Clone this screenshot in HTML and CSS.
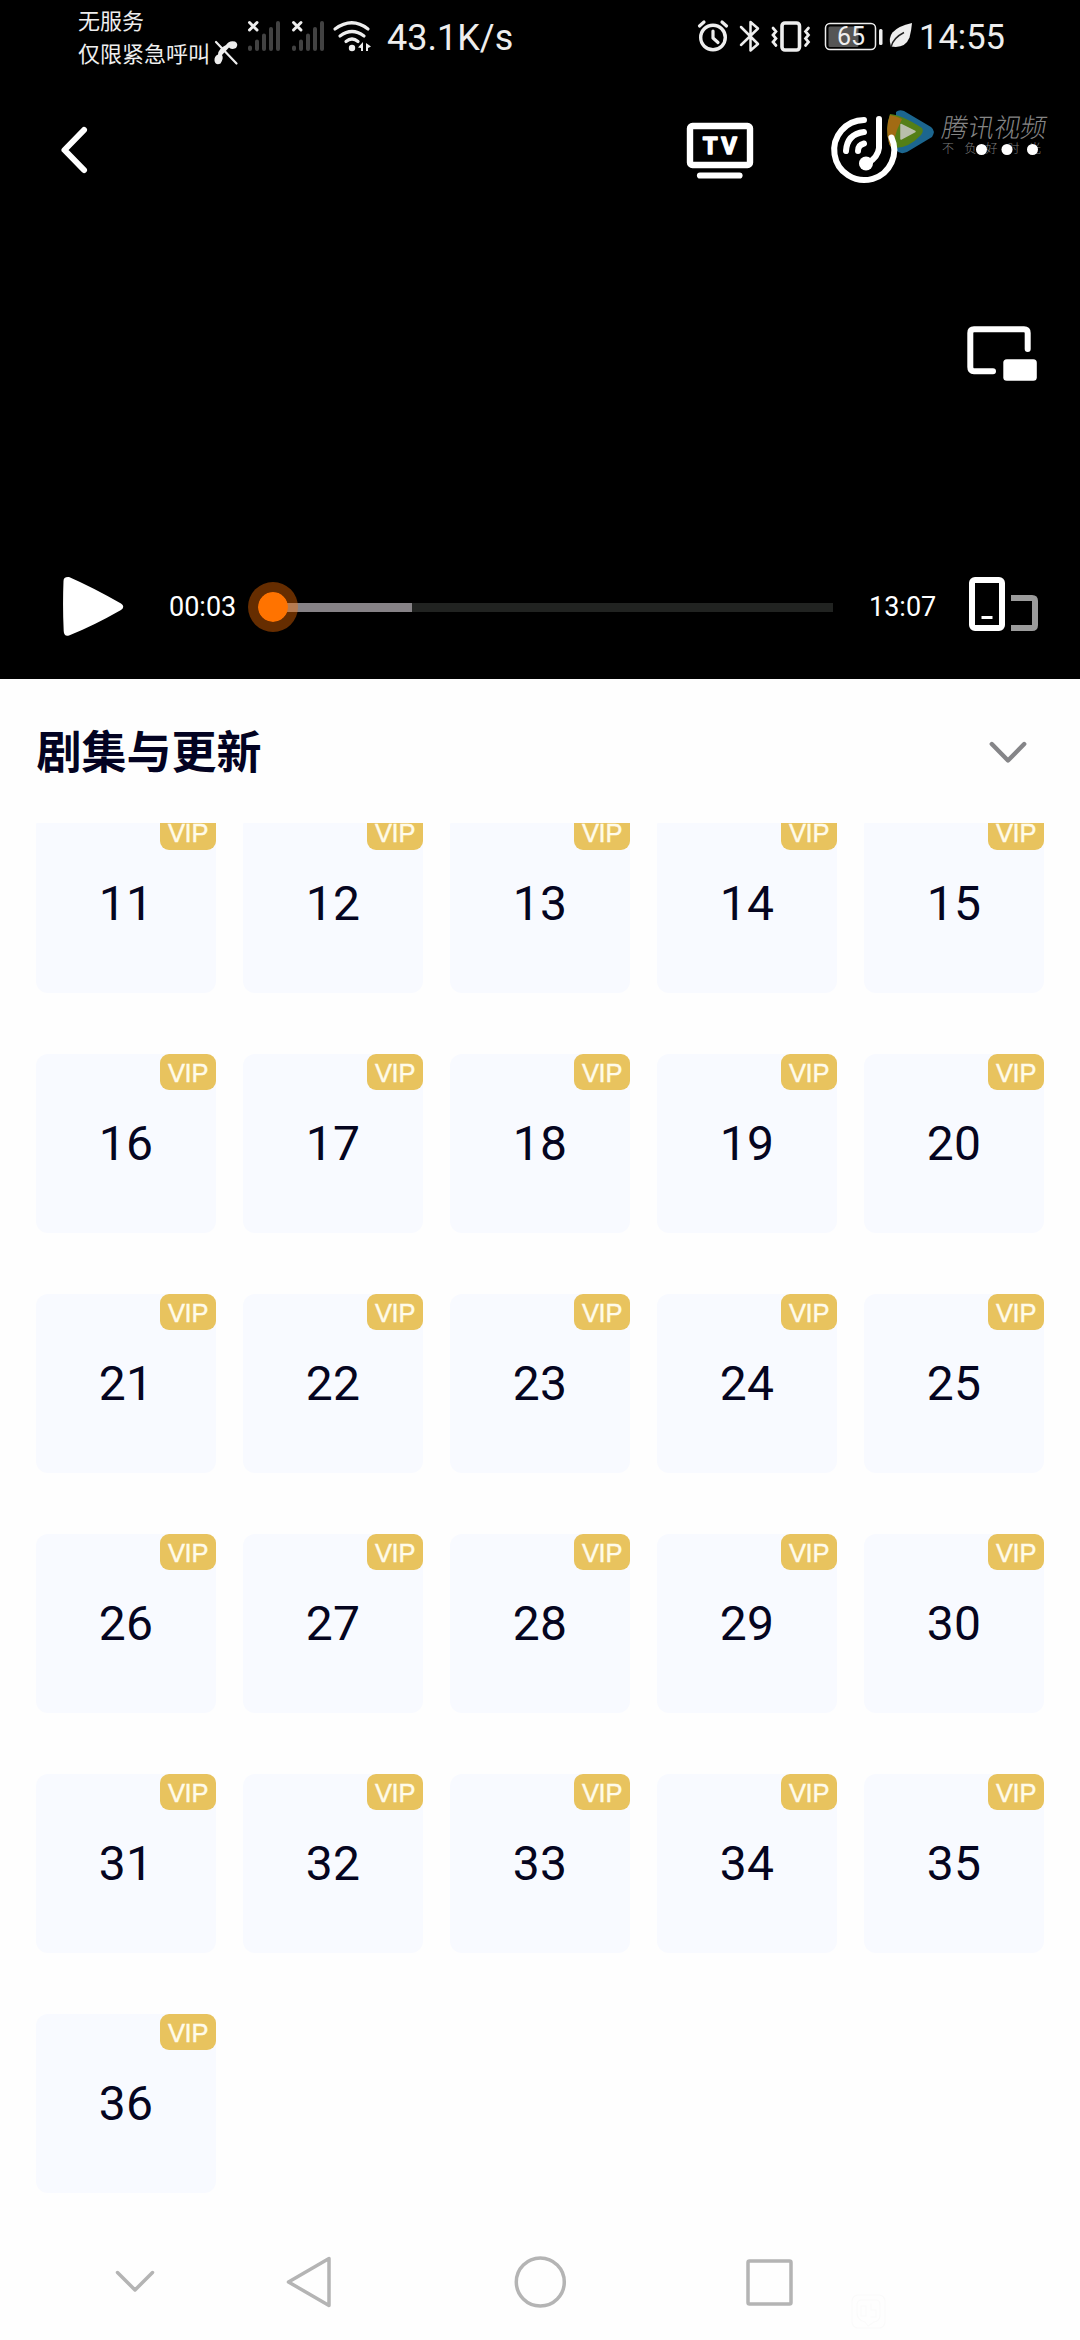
FILE: index.html
```html
<!DOCTYPE html>
<html lang="zh-CN">
<head>
<meta charset="utf-8">
<title>剧集与更新</title>
<link rel="stylesheet" href="styles.css">
</head>
<body>
<section class="player">
  <div class="status">
    <div class="carrier"><span>无服务</span><span>仅限紧急呼叫</span></div>
    <svg class="net-icons" width="162" height="72" viewBox="212 0 162 72">
      <path d="M216 42 236.500 63.500" stroke="#eee" stroke-width="2.200" stroke-linecap="round"/>
      <path d="M226 45Q229 40 235 41.500 239 44 236 48 231 50 229 47.500L222 55Q224 58 220.500 63.500 216 66 214.500 61 214 56 218 54.500 218 49 226 45Z" fill="#eee"/>
      <g id="sig">
        <path d="M249.500 22.500 257 30M257 22.500 249.500 30" stroke="#eee" stroke-width="3" stroke-linecap="round"/>
        <path d="M250 47.500V49M257 41.500V49M264 35.500V49M271 29V49M278 23V49" stroke="#424242" stroke-width="4" stroke-linecap="round"/>
      </g>
      <use href="#sig" x="44"/>
      <g fill="none" stroke="#eee" stroke-width="3.200" stroke-linecap="round">
        <path d="M335 29Q352 16.500 368 29M340 36Q352 27 364 36M346 41.500Q352 36.500 358 41.500"/>
      </g>
      <circle cx="352" cy="48" r="3.200" fill="#eee"/>
      <path d="M363 42V51H361V48L358 47.500ZM366 43 371 46.500 368 48V51H366Z" fill="#eee"/>
    </svg>
    <span class="speed">43.1K/s</span>
    <svg class="sys-icons" width="219" height="72" viewBox="696 0 219 72" fill="none" stroke="#eee">
      <circle cx="713" cy="37.500" r="12.300" stroke-width="3.400"/>
      <path d="M713 31V38L718 42.500M699.500 26 704 22M722 22 726.500 26" stroke-width="3.200" stroke-linecap="round" stroke-linejoin="round"/>
      <path d="M741 27 758 44 750.500 50.500V22L758 28.500 741 45" stroke-width="2.500" stroke-linecap="round" stroke-linejoin="round"/>
      <rect x="782" y="23" width="17.500" height="27" rx="3" stroke-width="3.600"/>
      <path d="M773 28 776 31.500 773 35 776 38.500 773 42 776 45.500M808.500 28 805.500 31.500 808.500 35 805.500 38.500 808.500 42 805.500 45.500" stroke-width="2.700" stroke-linecap="round"/>
      <rect x="828.500" y="26.500" width="30" height="20.500" rx="1.500" fill="#555" stroke="none"/>
      <rect x="825.500" y="23.500" width="50" height="26" rx="4.500" stroke-width="1.500"/>
      <rect x="879" y="29" width="3.500" height="16" rx="1.500" fill="#eee" stroke="none"/>
      <text class="battery" x="851" y="45.300" text-anchor="middle">65</text>
      <path d="M912 23Q898 26 892.500 32.500 888 38 891 46.500 905 49 909.500 37.500 911.500 30 912 23Z" fill="#eee" stroke="none"/>
      <path d="M891 47Q893 38 904 32.500" stroke="#222" stroke-width="1.400"/>
    </svg>
    <span class="time">14:55</span>
  </div>

  <div class="topbar">
    <svg width="40" height="96" viewBox="56 102 40 96"><path d="M84 130 64.500 150 84 170" fill="none" stroke="#fff" stroke-width="6" stroke-linecap="round" stroke-linejoin="round"/></svg>
    <svg class="cast" width="70" height="96" viewBox="685 102 70 96">
      <rect x="690" y="126" width="60" height="39" rx="2.500" fill="none" stroke="#fff" stroke-width="6.400"/>
      <path d="M700 175.500H739.500" stroke="#fff" stroke-width="6.200" stroke-linecap="round"/>
      <text class="tv" x="721.500" y="154" text-anchor="middle">TV</text>
    </svg>
    <svg class="brand" width="225" height="96" viewBox="829 102 225 96">
      <path d="M896 112Q899 109 904 111L931 127Q936 131 932 137L907 152Q900 155 896 150Z" fill="#1c668f"/>
      <path d="M890 114Q902 115 922 128 924 131 921 135 908 149 893 148 890 147 889 143 885 128 890 114Z" fill="#547f16"/>
      <path d="M890 115Q896 116 902 119L897 130 892 147Q890 147 889 143 885 128 890 115Z" fill="#a26b14"/>
      <path d="M901 124.500 915 131.500 901 139Z" fill="#b9bfaa" stroke="#b9bfaa" stroke-width="1.500" stroke-linejoin="round"/>
      <g fill="none" stroke="#fff" stroke-width="6" stroke-linecap="round">
        <path d="M864 120A30 30 0 1 0 891.500 137.500"/>
        <path d="M864 132Q847 134 846 151"/>
        <path d="M864 143.500Q858 145 858 151"/>
        <path d="M879 119V148Q878 157 868 163"/>
      </g>
      <circle cx="866" cy="163.500" r="7" fill="#fff"/>
      <text class="brand-name" x="0" y="0" transform="translate(940.500 136.500) skewX(-10)">腾讯视频</text>
      <text class="slogan" x="942 964.500 985.500 1007.500 1029" y="152.500">不负好时光</text>
      <g fill="#fff"><circle cx="981.500" cy="149.500" r="5.500"/><circle cx="1007" cy="149.500" r="5.500"/><circle cx="1032.500" cy="149.500" r="5.500"/></g>
    </svg>
  </div>

  <div class="pip">
    <svg width="76" height="62" viewBox="964 322 76 62">
      <path d="M1027.700 349V333Q1027.700 329.300 1024 329.300H974Q970.300 329.300 970.300 333V367Q970.300 371.300 974 371.300H993" fill="none" stroke="#fff" stroke-width="6" stroke-linecap="round"/>
      <rect x="1003.300" y="359.300" width="33.500" height="21.500" rx="3.500" fill="#fff"/>
    </svg>
  </div>

  <div class="controls">
    <svg width="62" height="62" viewBox="62 576 62 62"><path d="M63.500 581Q63.500 576.500 69 577 92 587 121 603.500 125.500 606.500 121 610 93 626 69 635.500 64 637 63.700 631 62.500 606 63.500 581Z" fill="#fff"/></svg>
    <span class="clock">00:03</span>
    <div class="slider"><div class="buffer"></div><div class="thumb"></div></div>
    <span class="clock total">13:07</span>
    <svg class="rotate" width="72" height="62" viewBox="968 576 72 62" fill="none">
      <rect x="972" y="580" width="30" height="48" rx="3" stroke="#fff" stroke-width="6"/>
      <path d="M981.500 617.500H992.500" stroke="#fff" stroke-width="3"/>
      <path d="M1011 598H1032Q1035 598 1035 601V625Q1035 628 1032 628H1011" stroke="#9b9b9b" stroke-width="6"/>
    </svg>
  </div>
</section>

<main class="sheet">
  <header class="heading">
    <h1>剧集与更新</h1>
    <svg width="44" height="30" viewBox="986 737 44 30"><path d="M991.800 744 1008 760.500 1024.200 744" fill="none" stroke="#858588" stroke-width="4.400" stroke-linecap="round" stroke-linejoin="round"/></svg>
  </header>
  <div class="viewport">
    <div class="grid">
      <div class="ep">11<b>VIP</b></div><div class="ep">12<b>VIP</b></div><div class="ep">13<b>VIP</b></div><div class="ep">14<b>VIP</b></div><div class="ep">15<b>VIP</b></div>
      <div class="ep">16<b>VIP</b></div><div class="ep">17<b>VIP</b></div><div class="ep">18<b>VIP</b></div><div class="ep">19<b>VIP</b></div><div class="ep">20<b>VIP</b></div>
      <div class="ep">21<b>VIP</b></div><div class="ep">22<b>VIP</b></div><div class="ep">23<b>VIP</b></div><div class="ep">24<b>VIP</b></div><div class="ep">25<b>VIP</b></div>
      <div class="ep">26<b>VIP</b></div><div class="ep">27<b>VIP</b></div><div class="ep">28<b>VIP</b></div><div class="ep">29<b>VIP</b></div><div class="ep">30<b>VIP</b></div>
      <div class="ep">31<b>VIP</b></div><div class="ep">32<b>VIP</b></div><div class="ep">33<b>VIP</b></div><div class="ep">34<b>VIP</b></div><div class="ep">35<b>VIP</b></div>
      <div class="ep">36<b>VIP</b></div>
    </div>
  </div>
</main>

<nav class="navbar">
  <svg width="1080" height="116" viewBox="0 2224 1080 116" fill="none" stroke="#b4b4b4" stroke-width="3.500" stroke-linejoin="round" stroke-linecap="round">
    <path d="M117.500 2272.500 135 2290 152.500 2272.500"/>
    <path d="M329 2258.500V2305.500L288.500 2282Z"/>
    <circle cx="540.300" cy="2282" r="24"/>
    <rect x="748" y="2261" width="43" height="43" rx="1.500"/>
    <g stroke="#fafafa" stroke-width="1.200"><rect x="852" y="2295" width="33" height="33" rx="6"/><path d="M862 2300H876Q880 2300 880 2305V2315Q880 2321 874 2322L868 2326 865 2322Q857 2320 857 2313V2305Q857 2300 862 2300ZM861 2306H866V2316H861ZM871 2304V2310H876V2317H871"/></g>
  </svg>
</nav>
</body>
</html>
```
FILE: styles.css
```css
* { box-sizing: border-box; }

body {
  margin: 0;
  width: 1080px;
  height: 2340px;
  display: flex;
  flex-direction: column;
  overflow: hidden;
  background: #fefefe;
  font-family: Roboto, "Noto Sans CJK SC", sans-serif;
}

svg { display: block; flex: none; }

.player {
  flex: none;
  height: 679px;
  background: #000;
  color: #fff;
}

/* system status bar */
.status {
  display: flex;
  height: 72px;
  padding-left: 78px;
  color: #eee;
}
.carrier {
  display: flex;
  flex-direction: column;
  width: 134px;
  padding-top: 3px;
  font: 400 22px/32.5px "Noto Sans CJK SC", sans-serif;
  white-space: nowrap;
}
.speed {
  width: 309px;
  margin-left: 13px;
  font-size: 36px;
  line-height: 76px;
}
.time {
  margin-left: 4px;
  font-size: 34.5px;
  line-height: 75px;
}
.battery { font: 25px Roboto, sans-serif; fill: #eee; stroke: none; }

/* player chrome */
.topbar {
  display: flex;
  height: 96px;
  margin-top: 30px;
  padding-left: 56px;
}
.cast { margin-left: 589px; }
.brand { margin-left: 74px; }
.tv {
  font: 700 24px Roboto, sans-serif;
  letter-spacing: 3.5px;
  fill: #fff;
  stroke: #fff;
  stroke-width: 1.4px;
  stroke-linejoin: round;
}
.brand-name { font: 300 26.2px "Noto Sans CJK SC", sans-serif; fill: #858585; }
.slogan { font: 300 12px "Noto Sans CJK SC", sans-serif; fill: #7c7c7c; }

.pip {
  display: flex;
  justify-content: flex-end;
  padding: 124px 40px 0 0;
}

.controls {
  display: flex;
  align-items: center;
  height: 62px;
  margin-top: 192px;
  padding-left: 62px;
}
.clock {
  width: 67px;
  margin-left: 45px;
  font-size: 27px;
  line-height: 62px;
}
.slider {
  position: relative;
  width: 560px;
  height: 9px;
  margin-left: 37px;
  background: #212321;
}
.buffer { width: 139px; height: 9px; background: #868286; }
.thumb {
  position: absolute;
  left: -25px;
  top: -21px;
  width: 50px;
  height: 50px;
  border: 10px solid rgba(255, 112, 0, .4);
  border-radius: 50%;
  background: #ff7300;
  background-clip: padding-box;
}
.total { margin-left: 36px; }
.rotate { margin-left: 32px; }

/* episode sheet */
.sheet { flex: none; height: 1545px; }
.heading {
  display: flex;
  align-items: center;
  justify-content: space-between;
  height: 144px;
  padding: 0 50px 0 36.5px;
}
.heading svg { margin-top: 2px; }
h1 {
  margin: -3px 0 0;
  font: 700 45px/60px "Noto Sans CJK SC", sans-serif;
  color: #030322;
}
.viewport {
  height: 1401px;
  padding: 0 36px;
  overflow: hidden;
}
.grid {
  display: grid;
  grid-template-columns: repeat(5, 180px);
  grid-auto-rows: 179px;
  gap: 61px 27px;
  margin-top: -9px;
}
.ep {
  position: relative;
  display: flex;
  align-items: center;
  justify-content: center;
  border-radius: 12px;
  background: #f8faff;
  color: #050520;
  font-size: 48px;
  letter-spacing: .2px;
}
.ep b {
  position: absolute;
  top: 0;
  right: 0;
  width: 56px;
  height: 36px;
  border-radius: 9px;
  background: #e8c35e;
  color: #fffbea;
  font: 400 25.5px/38px "Liberation Sans", Arial, sans-serif;
  -webkit-text-stroke: .4px #fffbea;
  letter-spacing: -.3px;
  text-align: center;
}

.navbar { flex: none; height: 116px; }
```
